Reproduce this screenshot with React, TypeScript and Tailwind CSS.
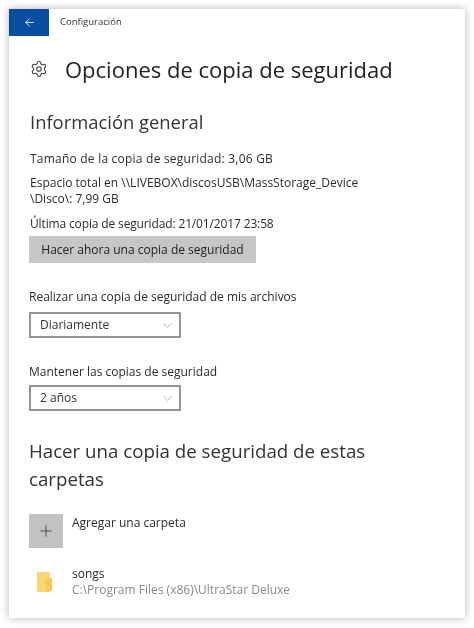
import { ArrowLeft, ChevronDown, Plus, Settings } from "lucide-react";

function Dropdown({ value }: { value: string }) {
  return (
    <div className="flex h-[26px] w-[152px] items-center justify-between border-2 border-[#949494] pl-[9px] pr-[4px] text-[#333]">
      <span>{value}</span>
      <ChevronDown className="h-[15px] w-[15px] text-[#9a9a9a]" strokeWidth={1.25} />
    </div>
  );
}

export default function App() {
  return (
    <div className="h-[628px] w-[474px] overflow-hidden bg-white p-[9px] font-['Open_Sans',sans-serif] text-[12px] text-[#2b2b2b]">
      <div className="flex h-[609px] w-[456px] flex-col bg-white shadow-[0_0_8px_rgba(0,0,0,0.3)] blur-[0.4px]">
        <div className="flex h-[27px] items-center">
          <div className="flex h-full w-[40px] items-center justify-center bg-[#074da0] text-[#dfe9f5]">
            <ArrowLeft className="h-[13px] w-[13px]" strokeWidth={1.75} />
          </div>
          <span className="ml-[11px] text-[9.5px] text-[#333]">Configuración</span>
        </div>

        <div className="mt-[16px] flex h-[34px] items-center pl-[21px]">
          <Settings className="h-[18px] w-[18px] text-[#444]" strokeWidth={1.5} />
          <h1 className="ml-[17px] text-[22px] leading-none text-[#222]">Opciones de copia de seguridad</h1>
        </div>

        <h2 className="mt-[23px] pl-[21px] text-[18.4px] leading-[26px] text-[#333]">Información general</h2>

        <div className="mt-[15px] pl-[20px] pr-[80px]">
          <p className="pl-[1px] leading-[18px] tracking-[0.22px]">Tamaño de la copia de seguridad: 3,06 GB</p>
          <p className="mt-[7px] pl-[1px] leading-[16px]">
            Espacio total en \\LIVEBOX\discosUSB\MassStorage_Device
            <br />
            \Disco\: 7,99 GB
          </p>
          <p className="mt-[8px] pl-[1px] leading-[18px] tracking-[-0.14px]">Última copia de seguridad: 21/01/2017 23:58</p>
          <div className="mt-[3px] flex h-[27px] w-[227px] items-center justify-center bg-[#c6c6c6] text-[#222]">
            Hacer ahora una copia de seguridad
          </div>
        </div>

        <div className="mt-[25px] pl-[20px]">
          <p className="leading-[18px]">Realizar una copia de seguridad de mis archivos</p>
          <div className="mt-[6px]">
            <Dropdown value="Diariamente" />
          </div>
        </div>

        <div className="mt-[25px] pl-[20px]">
          <p className="leading-[18px]">Mantener las copias de seguridad</p>
          <div className="mt-[4px]">
            <Dropdown value="2 años" />
          </div>
        </div>

        <h2 className="mt-[26px] pl-[20px] pr-[60px] text-[18.7px] leading-[28px] text-[#333]">
          Hacer una copia de seguridad de estas carpetas
        </h2>

        <div className="mt-[21px] flex items-start pl-[20px]">
          <div className="flex h-[34px] w-[34px] items-center justify-center bg-[#c2c2c2] text-[#444]">
            <Plus className="h-[18px] w-[18px]" strokeWidth={1.25} />
          </div>
          <span className="ml-[9px] leading-[18px]">Agregar una carpeta</span>
        </div>

        <div className="mt-[18px] flex items-center pl-[20px]">
          <div className="flex w-[34px] pl-[8px]">
            <svg width="15" height="20" viewBox="0 0 15 20">
              <path d="M0 0h13v20H0z" fill="#f9d873" />
              <path d="M9 6h6v13H9z" fill="#f5cb55" />
            </svg>
          </div>
          <div className="ml-[9px] leading-[16px]">
            <div>songs</div>
            <div className="text-[#8a8a8a]">C:\Program Files (x86)\UltraStar Deluxe</div>
          </div>
        </div>
      </div>
    </div>
  );
}
